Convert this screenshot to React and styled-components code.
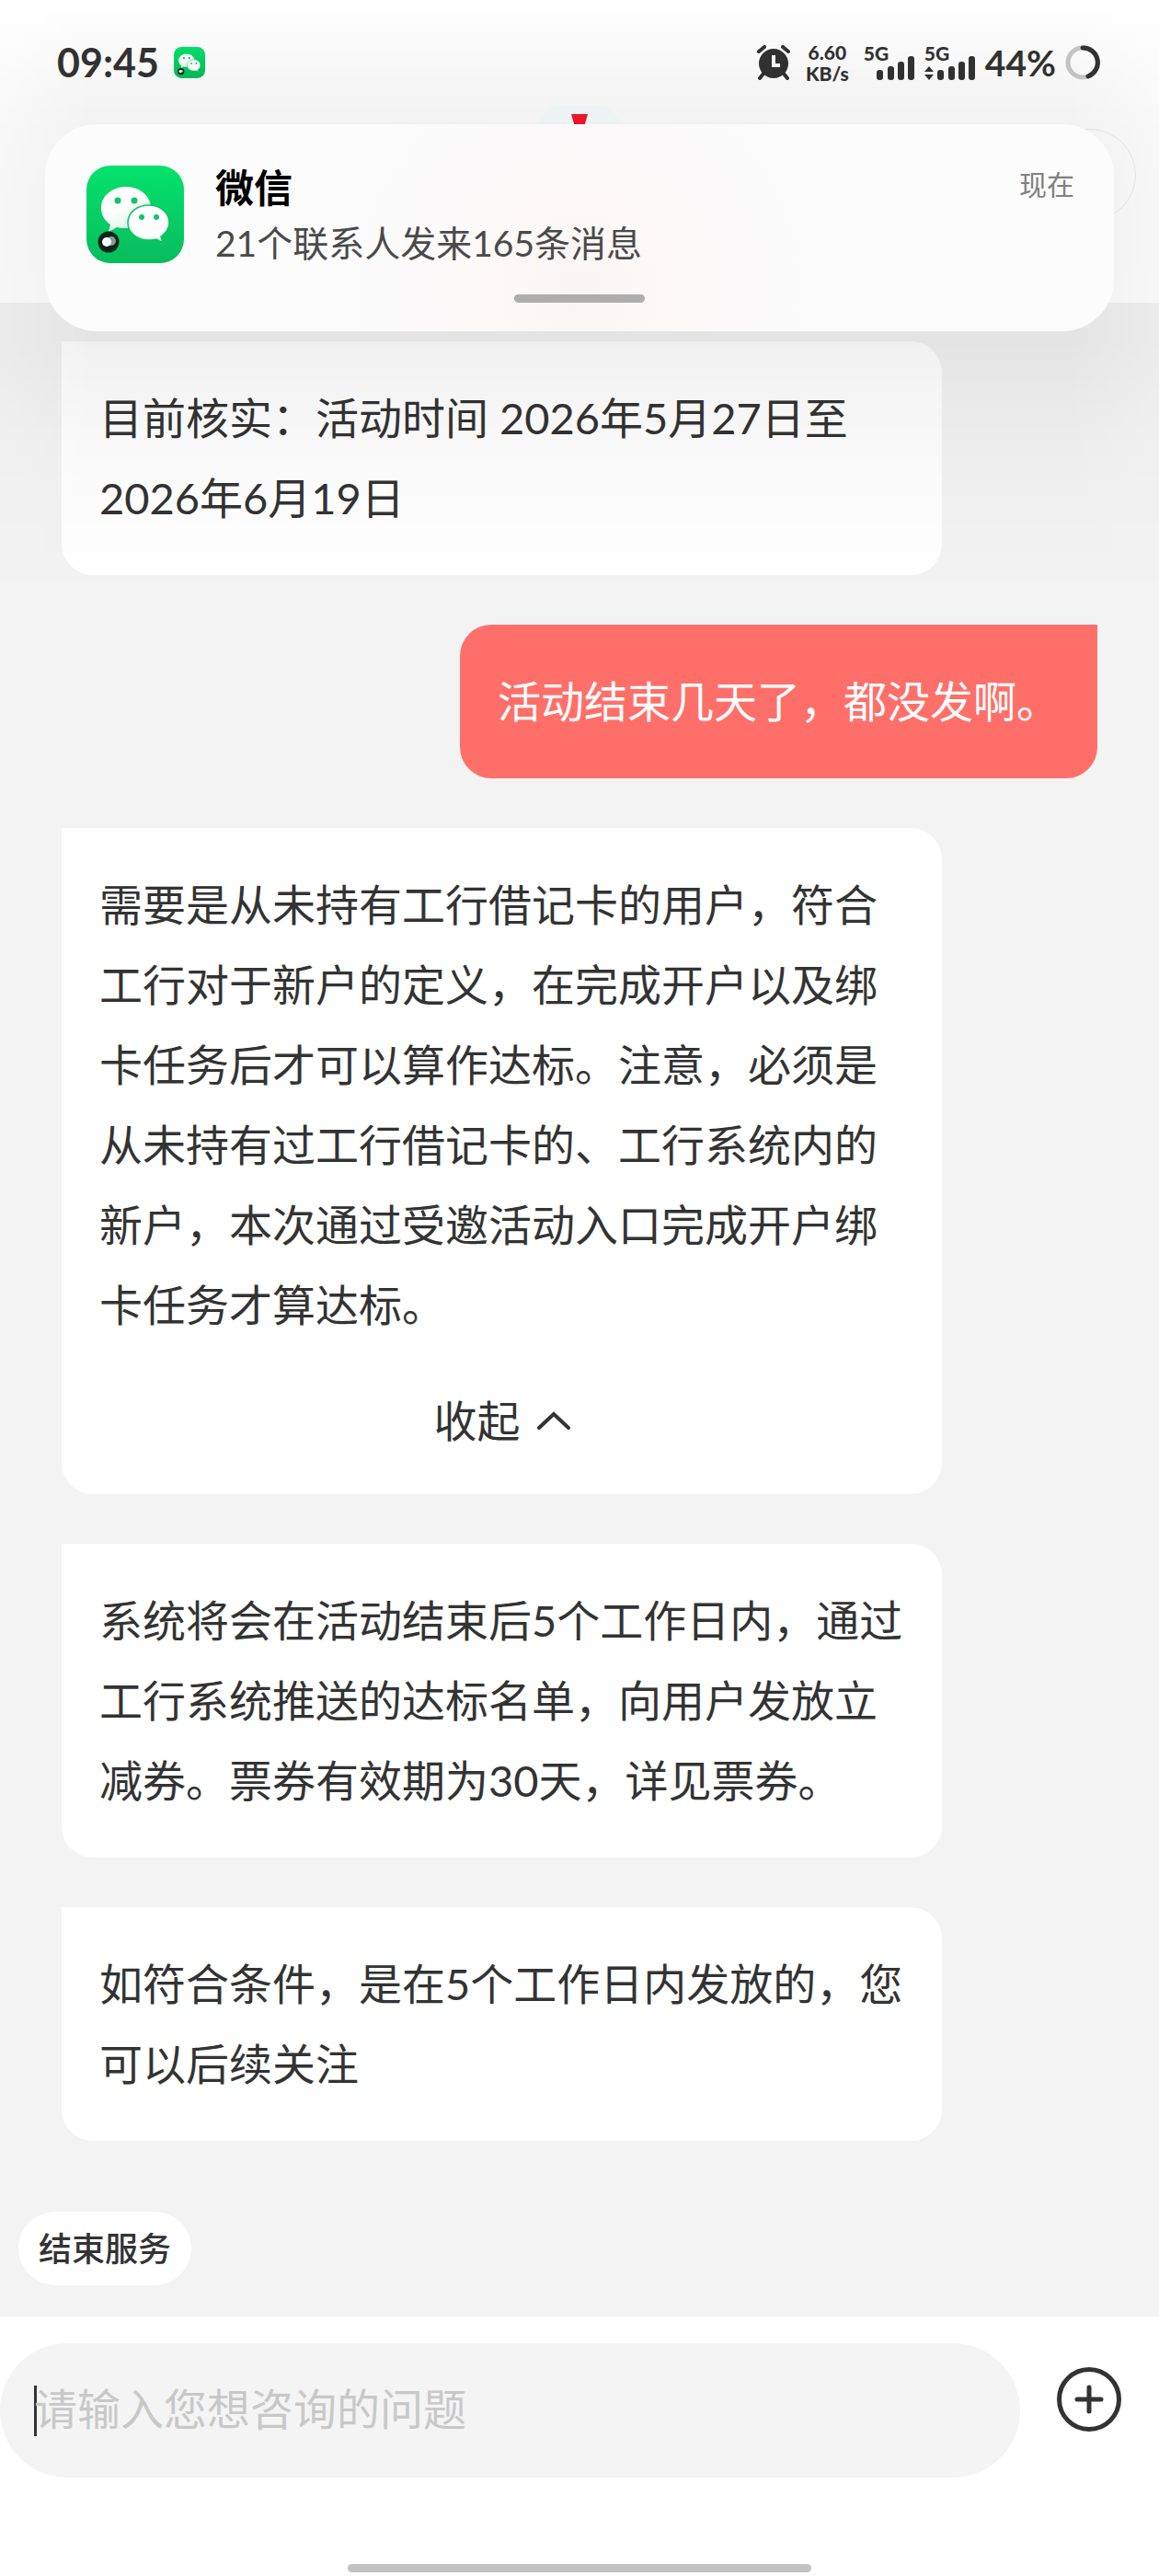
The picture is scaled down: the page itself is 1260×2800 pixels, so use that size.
import React, { useState } from "react";
import styled, { createGlobalStyle } from "styled-components";

const GlobalStyle = createGlobalStyle`
  * {
    box-sizing: border-box;
  }
  body {
    margin: 0;
    background: #f3f3f3;
    color: #333;
    font-family: Lato, "Noto Sans CJK SC", sans-serif;
  }
  button,
  input {
    font-family: inherit;
    color: inherit;
    border: none;
    padding: 0;
  }
  p {
    margin: 0;
  }
`;

const messages = [
  { id: 1, text: "目前核实：活动时间 2026年5月27日至2026年6月19日" },
  { id: 2, mine: true, text: "活动结束几天了，都没发啊。" },
  {
    id: 3,
    foldable: true,
    text: "需要是从未持有工行借记卡的用户，符合工行对于新户的定义，在完成开户以及绑卡任务后才可以算作达标。注意，必须是从未持有过工行借记卡的、工行系统内的新户，本次通过受邀活动入口完成开户绑卡任务才算达标。",
  },
  {
    id: 4,
    text: "系统将会在活动结束后5个工作日内，通过工行系统推送的达标名单，向用户发放立减券。票券有效期为30天，详见票券。",
  },
  { id: 5, text: "如符合条件，是在5个工作日内发放的，您可以后续关注" },
];

const WechatIcon = ({ size }) => (
  <svg width={size} height={size} viewBox="0 0 106 106" aria-hidden="true">
    <defs>
      <linearGradient id="wxGreen" x1="0" y1="0" x2="0" y2="1">
        <stop offset="0" stopColor="#05e26c" />
        <stop offset="1" stopColor="#07bd5c" />
      </linearGradient>
      <linearGradient id="wxBubble" x1="0.2" y1="0" x2="0.9" y2="1">
        <stop offset="0.4" stopColor="#fff" />
        <stop offset="1" stopColor="#c3f2d6" />
      </linearGradient>
    </defs>
    <rect width="106" height="106" rx="26" fill="url(#wxGreen)" />
    <path
      d="M43 23c-15 0-27 10-27 23 0 8 4 14 10 18l-2 8 9-5c3 1 6 1 10 1 15 0 27-9 27-22S58 23 43 23z"
      fill="url(#wxBubble)"
    />
    <circle cx="34" cy="38" r="3.5" fill="#10c468" />
    <circle cx="52" cy="38" r="3.5" fill="#10c468" />
    <path
      d="M68 43c-13 0-23 8-23 19s10 19 23 19c3 0 5 0 8-1l7 4-2-7c5-3 9-9 9-15 0-11-10-19-22-19z"
      fill="#fff"
      stroke="#08c561"
      strokeWidth="1.5"
    />
    <circle cx="60" cy="56" r="3" fill="#10c468" />
    <circle cx="76" cy="56" r="3" fill="#10c468" />
    <circle cx="24" cy="83" r="11.5" fill="#06281a" />
    <circle cx="27" cy="82" r="5" fill="#8a9a92" />
    <circle cx="22" cy="83" r="5" fill="#fff" />
  </svg>
);

const AlarmIcon = () => (
  <svg width="38" height="38" viewBox="0 0 38 38" aria-hidden="true">
    <circle cx="19" cy="20" r="16" fill="#333" />
    <g stroke="#333" strokeWidth="4" strokeLinecap="round" fill="none">
      <path d="M3 7l6-5M35 7l-6-5M8 31l-4 5M30 31l4 5" />
    </g>
    <path d="M19 11v11h7" stroke="#fafafa" strokeWidth="4" fill="none" />
  </svg>
);

const SignalIcon = ({ arrows }) => (
  <svg width="56" height="38" viewBox="0 0 56 38" aria-hidden="true">
    <g fill="#333">
      {arrows && <path d="M5 23l5 6H0zM5 38l5-6H0z" />}
      <rect x="14" y="27" width="7" height="11" rx="3" />
      <rect x="26" y="23" width="7" height="15" rx="3" />
      <rect x="37" y="18" width="7" height="20" rx="3" />
      <rect x="48" y="12" width="7" height="26" rx="3" />
    </g>
  </svg>
);

const BatteryRing = () => (
  <svg width="38" height="38" viewBox="0 0 38 38" aria-hidden="true">
    <g fill="none" strokeWidth="5">
      <circle cx="19" cy="19" r="16" stroke="#c9c9c9" />
      <path d="M19 3a16 16 0 0 1 6 31" stroke="#333" strokeLinecap="round" />
    </g>
  </svg>
);

const App = () => {
  const [folded, setFolded] = useState(false);
  const [question, setQuestion] = useState("");

  return (
    <Page>
      <GlobalStyle />
      <Header>
        <StatusBar>
          <Clock>09:45</Clock>
          <WechatIcon size={34} />
          <StatusIcons>
            <AlarmIcon />
            <NetSpeed>
              <span>6.60</span>
              <span>KB/s</span>
            </NetSpeed>
            <Signal>
              <NetType>5G</NetType>
              <SignalIcon />
            </Signal>
            <Signal>
              <NetType>5G</NetType>
              <SignalIcon arrows />
            </Signal>
            <Battery>44%</Battery>
            <BatteryRing />
          </StatusIcons>
        </StatusBar>
        {/* title bar, mostly under the notification */}
        <TitleBar>
          <span />
          <Mascot width="94" height="90" viewBox="0 0 94 90" aria-hidden="true">
            <rect x="1" y="2" width="92" height="88" rx="30" fill="#f9fffe" />
            <path d="M38 12h18l-4 14H42z" fill="#f8152a" />
          </Mascot>
          <Capsule />
        </TitleBar>
      </Header>

      <Shade />
      <Notification>
        <WechatIcon size={106} />
        <NoticeBody>
          <NoticeTitle>微信</NoticeTitle>
          <NoticeText>21个联系人发来165条消息</NoticeText>
        </NoticeBody>
        <NoticeTime>现在</NoticeTime>
        <NoticeHandle />
      </Notification>

      <Chat>
        {messages.map((m) => (
          <Bubble key={m.id} $mine={m.mine}>
            {m.foldable && folded ? null : <p>{m.text}</p>}
            {m.foldable && (
              <FoldButton type="button" onClick={() => setFolded(!folded)}>
                {folded ? "展开" : "收起"}
                <svg width="36" height="20" viewBox="0 0 36 20" aria-hidden="true">
                  <path
                    d={folded ? "M2 2l16 16 16-16" : "M2 18L18 3l16 15"}
                    fill="none"
                    stroke="#333"
                    strokeWidth="4"
                    strokeLinecap="round"
                  />
                </svg>
              </FoldButton>
            )}
          </Bubble>
        ))}
      </Chat>

      <QuickActions>
        <QuickButton type="button">结束服务</QuickButton>
      </QuickActions>

      <Footer>
        <InputRow onSubmit={(e) => e.preventDefault()}>
          <InputBox>
            <Caret />
            <input
              type="text"
              aria-label="咨询问题"
              placeholder="请输入您想咨询的问题"
              value={question}
              onChange={(e) => setQuestion(e.target.value)}
            />
          </InputBox>
          <PlusButton type="button" aria-label="更多">
            <svg width="70" height="70" viewBox="0 0 70 70" aria-hidden="true">
              <g fill="none" stroke="#333" strokeWidth="5" strokeLinecap="round">
                <circle cx="35" cy="35" r="32.5" />
                <path d="M35 22v26M22 35h26" />
              </g>
            </svg>
          </PlusButton>
        </InputRow>
        <HomeBar />
      </Footer>
    </Page>
  );
};

const Page = styled.div`
  position: relative;
  min-height: 100vh;
  display: flex;
  flex-direction: column;
`;

const Header = styled.header`
  height: 329px;
  background: #fff;
`;

const StatusBar = styled.div`
  display: flex;
  align-items: center;
  height: 112px;
  padding: 24px 64px 0 62px;
`;

const Clock = styled.span`
  margin-right: 16px;
  font-size: 43px;
  line-height: 48px;
  font-weight: 700;
`;

const StatusIcons = styled.div`
  display: flex;
  align-items: center;
  gap: 10px;
  margin-left: auto;
`;

const NetSpeed = styled.div`
  display: flex;
  flex-direction: column;
  align-items: center;
  margin: 0 6px;
  font-size: 21px;
  line-height: 23px;
  font-weight: 900;
`;

const Signal = styled.div`
  position: relative;
  display: flex;
`;

const NetType = styled.span`
  position: absolute;
  top: -3px;
  left: 0;
  font-size: 21px;
  line-height: 23px;
  font-weight: 900;
`;

const Battery = styled.span`
  font-size: 39px;
  line-height: 48px;
  font-weight: 700;
`;

const TitleBar = styled.div`
  display: grid;
  grid-template-columns: 1fr auto 1fr;
  padding: 0 25px;
`;

const Mascot = styled.svg`
  display: block;
`;

const Capsule = styled.span`
  justify-self: end;
  width: 240px;
  height: 100px;
  margin-top: 28px;
  border: 1px solid #ececec;
  border-radius: 50px;
`;

/* soft shadow cast by the notification, weaker at the screen edges */
const Shade = styled.div`
  position: absolute;
  top: 0;
  left: 0;
  right: 0;
  z-index: 1;
  height: 650px;
  pointer-events: none;
  background: linear-gradient(
    to bottom,
    rgba(0, 0, 0, 0) 0,
    rgba(0, 0, 0, 0.01) 30px,
    rgba(0, 0, 0, 0.03) 80px,
    rgba(0, 0, 0, 0.047) 120px,
    rgba(0, 0, 0, 0.062) 220px,
    rgba(0, 0, 0, 0.06) 370px,
    rgba(0, 0, 0, 0.04) 430px,
    rgba(0, 0, 0, 0.022) 485px,
    rgba(0, 0, 0, 0.01) 550px,
    rgba(0, 0, 0, 0) 650px
  );
  mask-image: linear-gradient(
    to right,
    rgba(0, 0, 0, 0.5),
    #000 8%,
    #000 92%,
    rgba(0, 0, 0, 0.5)
  );
`;

const Notification = styled.section`
  position: absolute;
  top: 135px;
  left: 49px;
  right: 49px;
  z-index: 2;
  display: flex;
  align-items: flex-start;
  height: 225px;
  padding: 45px 43px 0 45px;
  border-radius: 56px;
  background: radial-gradient(circle at 50% 80%, #fbf6f6, #fcf9f9 20%, #fcfcfc 45%);
`;

const NoticeBody = styled.div`
  flex: 1;
  margin-left: 34px;
`;

const NoticeTitle = styled.h2`
  margin: 0;
  font-size: 42px;
  line-height: 48px;
  font-weight: 700;
  color: #000;
`;

const NoticeText = styled.p`
  margin-top: 12px;
  font-size: 39px;
  line-height: 48px;
  color: #4a4a4a;
`;

const NoticeTime = styled.time`
  font-size: 30px;
  line-height: 40px;
  color: #808080;
`;

const NoticeHandle = styled.span`
  position: absolute;
  bottom: 31px;
  left: 50%;
  width: 142px;
  height: 9px;
  margin-left: -71px;
  border-radius: 5px;
  background: #adadad;
`;

const Chat = styled.main`
  flex: 1;
  display: flex;
  flex-direction: column;
  align-items: flex-start;
  gap: 54px;
  padding: 42px 67px 77px;
`;

const Bubble = styled.article`
  width: ${(props) => (props.$mine ? "auto" : "85%")};
  max-width: 85%;
  align-self: ${(props) => (props.$mine ? "flex-end" : "flex-start")};
  padding: 40px 41px;
  border-radius: ${(props) =>
    props.$mine ? "34px 0 34px 34px" : "0 34px 34px 34px"};
  background: ${(props) => (props.$mine ? "#ff6f69" : "#fff")};
  color: ${(props) => (props.$mine ? "#fff" : "#333")};
  font-size: 47px;
  line-height: 87px;
`;

const FoldButton = styled.button`
  display: flex;
  align-items: center;
  justify-content: center;
  gap: 18px;
  width: 100%;
  margin-top: 42px;
  background: transparent;
  font-size: 47px;
  line-height: 80px;
  cursor: pointer;
`;

const QuickActions = styled.div`
  display: flex;
  padding: 0 20px 34px;
`;

const QuickButton = styled.button`
  height: 80px;
  padding: 0 22px 4px;
  border-radius: 40px;
  background: #fff;
  font-size: 36px;
  font-weight: 500;
  cursor: pointer;
`;

const Footer = styled.footer`
  padding-top: 29px;
  background: #fff;
`;

const InputRow = styled.form`
  display: flex;
  align-items: flex-start;
`;

const InputBox = styled.div`
  flex: 1;
  display: flex;
  align-items: center;
  height: 146px;
  padding: 0 37px;
  border-radius: 73px;
  background: #f4f4f4;
  input {
    flex: 1;
    min-width: 0;
    height: 87px;
    padding-bottom: 4px;
    background: transparent;
    outline: none;
    font-size: 47px;
  }
  input::placeholder {
    color: #c8c8c8;
    opacity: 1;
  }
`;

const Caret = styled.span`
  width: 3px;
  height: 55px;
  margin-right: -3px;
  background: #333;
`;

const PlusButton = styled.button`
  display: flex;
  margin: 26px 41px 0 40px;
  background: transparent;
  cursor: pointer;
`;

const HomeBar = styled.div`
  width: 40%;
  height: 9px;
  margin: 94px auto 4px;
  border-radius: 5px;
  background: #c2c2c2;
`;

export default App;
